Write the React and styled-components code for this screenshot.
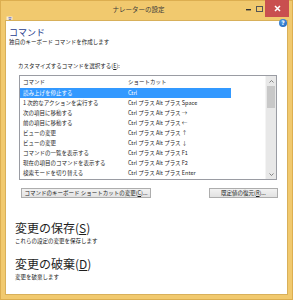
import React from 'react';
import styled, { createGlobalStyle } from 'styled-components';

const GlobalStyle = createGlobalStyle`
  html, body {
    margin: 0;
    padding: 0;
  }
  body {
    width: 293px;
    height: 300px;
    overflow: hidden;
    font-family: "Noto Sans CJK JP", "Noto Sans", sans-serif;
    color: #1e1e1e;
  }
`;

const Frame = styled.div`
  box-sizing: border-box;
  width: 293px;
  height: 300px;
  background: #f1c96e;
  border: 1px solid #dcae50;
  display: flex;
  flex-direction: column;
`;

const TitleBar = styled.div`
  height: 19px;
  display: flex;
  align-items: flex-start;
  position: relative;
`;

const AppIcon = styled.div`
  width: 8px;
  height: 8px;
  margin: 4px 0 0 5px;
`;

const Title = styled.div`
  flex: 1;
  text-align: center;
  font-size: 6.5px;
  line-height: 17px;
  color: #3a3a3a;
  padding-left: 20px;
`;

const Controls = styled.div`
  display: flex;
  align-items: flex-start;
  margin-top: -1px;
  margin-right: 3px;
`;

const CtrlButton = styled.div`
  width: ${p => p.w}px;
  height: 17px;
  display: flex;
  align-items: center;
  justify-content: center;
  background: ${p => (p.close ? '#c94f4f' : 'transparent')};
`;

const Client = styled.div`
  flex: 1;
  box-sizing: border-box;
  margin: 0 4px 4px;
  background: #fff;
  border: 1px solid #d8b05a;
  position: relative;
  display: flex;
  flex-direction: column;
`;

const HelpIcon = styled.div`
  position: absolute;
  top: -2px;
  right: 0px;
  width: 8px;
  height: 8px;
  border-radius: 50%;
  background: radial-gradient(circle at 40% 35%, #4f9de8, #1c5fb4);
  color: #fff;
  font-family: "DejaVu Sans", sans-serif;
  font-weight: bold;
  font-size: 6px;
  line-height: 8px;
  text-align: center;
`;

const Header = styled.div`
  padding: 7px 0 0 3px;
`;

const Heading = styled.div`
  font-size: 9px;
  line-height: 10px;
  color: #1f3d8e;
`;

const Small = styled.div`
  font-size: 5.5px;
  line-height: 8px;
  color: #202020;
  white-space: nowrap;
`;

const Section = styled.div`
  padding: 0 9px 0 12px;
`;

const Label = styled(Small)`
  margin-top: 16px;
`;

const ListBox = styled.div`
  box-sizing: border-box;
  margin: 5px 1px 0 1px;
  height: 105px;
  border: 1px solid #9a9ca3;
  display: flex;
`;

const Table = styled.div`
  flex: 1;
  display: flex;
  flex-direction: column;
`;

const Row = styled.div`
  display: grid;
  grid-template-columns: 105px 106px;
  height: ${p => (p.head ? 12 : 10)}px;
  align-items: center;
  font-size: 5.5px;
  white-space: nowrap;
  width: 211px;
  background: ${p => (p.selected ? '#3399ff' : 'transparent')};
  color: ${p => (p.selected ? '#fff' : '#1e1e1e')};
  margin-bottom: ${p => (p.selected ? 0 : 0)}px;

  span {
    padding-left: 3px;
    overflow: hidden;
    line-height: 10px;
  }
`;

const Scrollbar = styled.div`
  width: 10px;
  background: #e8e8e8;
  border-left: 1px solid #f4f4f4;
  display: flex;
  flex-direction: column;
`;

const Arrow = styled.div`
  height: 10px;
  display: flex;
  align-items: center;
  justify-content: center;
`;

const Thumb = styled.div`
  height: 22px;
  margin: 0 1px;
  background: #c8c8c8;
`;

const Track = styled.div`
  flex: 1;
`;

const Buttons = styled.div`
  display: flex;
  justify-content: space-between;
  margin: 8px 0 0 3px;
`;

const Button = styled.div`
  box-sizing: border-box;
  width: ${p => p.w}px;
  height: 10px;
  border: 1px solid #adadad;
  background: linear-gradient(#f2f2f2, #e2e2e2);
  font-size: 5.5px;
  line-height: 8px;
  text-align: center;
  white-space: nowrap;
  color: #1e1e1e;

  u {
    text-decoration: underline;
  }
`;

const Action = styled.div`
  padding-left: 9px;
  margin-top: ${p => p.mt}px;
`;

const ActionTitle = styled.div`
  font-size: 12px;
  line-height: 14px;
  color: #1e1e1e;
  white-space: nowrap;
`;

const ActionSub = styled(Small)`
  margin-top: 2px;
`;

const commands = [
  ['読み上げを停止する', 'Ctrl'],
  ['1 次的なアクションを実行する', 'Ctrl プラス Alt プラス Space'],
  ['次の項目に移動する', 'Ctrl プラス Alt プラス →'],
  ['前の項目に移動する', 'Ctrl プラス Alt プラス ←'],
  ['ビューの変更', 'Ctrl プラス Alt プラス ↑'],
  ['ビューの変更', 'Ctrl プラス Alt プラス ↓'],
  ['コマンドの一覧を表示する', 'Ctrl プラス Alt プラス F1'],
  ['現在の項目のコマンドを表示する', 'Ctrl プラス Alt プラス F2'],
  ['検索モードを切り替える', 'Ctrl プラス Alt プラス Enter'],
];

const App = () => {
  return (
    <>
      <GlobalStyle />
      <Frame>
        <TitleBar>
          <AppIcon>
            <svg width="8" height="8" viewBox="0 0 8 8">
              <rect x="0.5" y="0.5" width="6" height="6" fill="#fbeecf" />
              <circle cx="4" cy="5" r="1.8" fill="#3b3f8f" />
              <rect x="2.5" y="1" width="3" height="1.5" fill="#8a8fcf" />
            </svg>
          </AppIcon>
          <Title>ナレーターの設定</Title>
          <Controls>
            <CtrlButton w={11}>
              <svg width="6" height="6" viewBox="0 0 6 6">
                <rect x="0" y="3" width="5" height="1.4" fill="#333" />
              </svg>
            </CtrlButton>
            <CtrlButton w={11}>
              <svg width="7" height="6" viewBox="0 0 7 6">
                <rect x="0.5" y="0.5" width="6" height="5" fill="none" stroke="#555" strokeWidth="1" />
              </svg>
            </CtrlButton>
            <CtrlButton w={24} close>
              <svg width="7" height="7" viewBox="0 0 7 7">
                <path d="M1 1 L6 6 M6 1 L1 6" stroke="#fff" strokeWidth="1.5" />
              </svg>
            </CtrlButton>
          </Controls>
        </TitleBar>

        <Client>
          <HelpIcon>?</HelpIcon>
          <Header>
            <Heading>コマンド</Heading>
            <Small>独自のキーボード コマンドを作成します</Small>
          </Header>

          <Section>
            <Label>カスタマイズするコマンドを選択する(<u>E</u>):</Label>
            <ListBox>
              <Table>
                <Row head>
                  <span>コマンド</span>
                  <span>ショートカット</span>
                </Row>
                {commands.map(([name, key], i) => (
                  <Row key={i} selected={i === 0}>
                    <span>{name}</span>
                    <span>{key}</span>
                  </Row>
                ))}
              </Table>
              <Scrollbar>
                <Arrow>
                  <svg width="5" height="3" viewBox="0 0 5 3">
                    <path d="M0.5 2.5 L2.5 0.5 L4.5 2.5" fill="none" stroke="#777" strokeWidth="0.9" />
                  </svg>
                </Arrow>
                <Thumb />
                <Track />
                <Arrow>
                  <svg width="5" height="3" viewBox="0 0 5 3">
                    <path d="M0.5 0.5 L2.5 2.5 L4.5 0.5" fill="none" stroke="#777" strokeWidth="0.9" />
                  </svg>
                </Arrow>
              </Scrollbar>
            </ListBox>

            <Buttons>
              <Button w={130}>コマンドのキーボード ショートカットの変更(<u>C</u>)...</Button>
              <Button w={69}>既定値の復元(<u>R</u>)...</Button>
            </Buttons>
          </Section>

          <Action mt={23}>
            <ActionTitle>変更の保存(<u>S</u>)</ActionTitle>
            <ActionSub>これらの設定の変更を保存します</ActionSub>
          </Action>
          <Action mt={12}>
            <ActionTitle>変更の破棄(<u>D</u>)</ActionTitle>
            <ActionSub>変更を破棄します</ActionSub>
          </Action>
        </Client>
      </Frame>
    </>
  );
};

export default App;
